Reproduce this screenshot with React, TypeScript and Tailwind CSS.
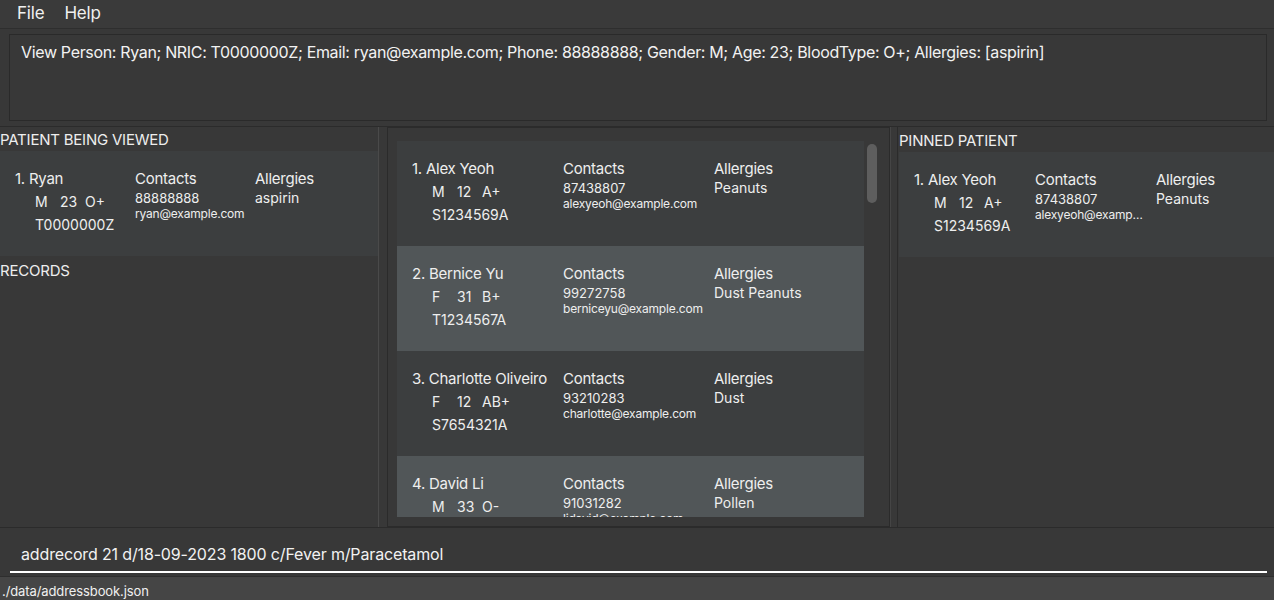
import type { ReactNode } from "react";

type Patient = {
  name: string;
  gender: string;
  age: string;
  blood: string;
  nric: string;
  phone: string;
  email: string;
  allergies: string;
};

const patients: Patient[] = [
  { name: "Alex Yeoh", gender: "M", age: "12", blood: "A+", nric: "S1234569A", phone: "87438807", email: "alexyeoh@example.com", allergies: "Peanuts" },
  { name: "Bernice Yu", gender: "F", age: "31", blood: "B+", nric: "T1234567A", phone: "99272758", email: "berniceyu@example.com", allergies: "Dust Peanuts" },
  { name: "Charlotte Oliveiro", gender: "F", age: "12", blood: "AB+", nric: "S7654321A", phone: "93210283", email: "charlotte@example.com", allergies: "Dust" },
  { name: "David Li", gender: "M", age: "33", blood: "O-", nric: "S1111111A", phone: "91031282", email: "lidavid@example.com", allergies: "Pollen" },
];

const viewed: Patient = {
  name: "Ryan",
  gender: "M",
  age: "23",
  blood: "O+",
  nric: "T0000000Z",
  phone: "88888888",
  email: "ryan@example.com",
  allergies: "aspirin",
};

function PatientCard({
  index,
  p,
  col,
  emailWidth,
  odd,
}: {
  index: number;
  p: Patient;
  col: string;
  emailWidth: string;
  odd?: boolean;
}) {
  return (
    <div
      className={`flex h-[105px] shrink-0 pl-[15px] pt-[18px] text-[#eeeeee] ${
        odd ? "bg-[#515658]" : "bg-[#3c3e3f]"
      }`}
    >
      <div className={`flex shrink-0 flex-col gap-[3px] ${col}`}>
        <div className="whitespace-nowrap text-[15px] leading-[20px] tracking-[-0.25px]">
          {index}. {p.name}
        </div>
        <div className="flex pl-[20px] text-[14px] leading-[20px]">
          <span className="w-[25px]">{p.gender}</span>
          <span className="w-[25px]">{p.age}</span>
          <span className="w-[25px]">{p.blood}</span>
        </div>
        <div className="pl-[20px] text-[14px] leading-[20px]">{p.nric}</div>
      </div>
      <div className={`flex shrink-0 flex-col ${col}`}>
        <div className="text-[15px] leading-[20px] tracking-[-0.25px]">Contacts</div>
        <div className="mt-[1px] text-[13px] leading-[16px]">{p.phone}</div>
        <div className={`truncate text-[12px] leading-[16px] tracking-[-0.2px] ${emailWidth}`}>{p.email}</div>
      </div>
      <div className="flex flex-col">
        <div className="text-[15px] leading-[20px] tracking-[-0.25px]">Allergies</div>
        <div className="mt-[1px] text-[14px] leading-[16px]">{p.allergies}</div>
      </div>
    </div>
  );
}

function SectionLabel({ children }: { children: ReactNode }) {
  return (
    <div className="h-[22px] text-[15px] leading-[22px] tracking-[-0.22px] text-[#eeeeee]">{children}</div>
  );
}

export default function App() {
  return (
    <div
      className="flex h-[600px] w-[1274px] flex-col overflow-hidden bg-[#383838] text-white"
      style={{ fontFamily: "Inter, 'Noto Sans', sans-serif" }}
    >
      {/* menu bar */}
      <div className="flex h-[29px] shrink-0 items-center gap-[20px] border-b border-[#2e2e2e] bg-[#3a3a3a] pl-[17px] text-[17px] tracking-[-0.2px] text-[#f0f0f0]">
        <span>File</span>
        <span>Help</span>
      </div>

      {/* result display */}
      <div className="shrink-0 border-b border-[#2b2b2b] px-[7px] pb-[5px] pt-[5px]">
        <div className="ml-[2px] h-[87px] border border-[#2a2a2a] bg-[#383838] pl-[11px] pt-[6px] text-[16px] leading-[22px] tracking-[-0.34px] text-[#f2f2f2]">
          View Person: Ryan; NRIC: T0000000Z; Email: ryan@example.com; Phone: 88888888; Gender: M; Age: 23; BloodType: O+; Allergies: [aspirin]
        </div>
      </div>

      {/* panels */}
      <div className="flex h-[401px] shrink-0 border-b border-[#2b2b2b]">
        <div className="flex w-[378px] shrink-0 flex-col pt-[2px]">
          <SectionLabel>PATIENT BEING VIEWED</SectionLabel>
          <PatientCard index={1} p={viewed} col="w-[120px]" emailWidth="max-w-[118px]" />
          <div className="mt-[4px]">
            <SectionLabel>RECORDS</SectionLabel>
          </div>
        </div>
        <div className="w-[9px] shrink-0 border-l border-[#4a4a4a]" />
        <div className="flex w-[503px] shrink-0 border border-[#2b2b2b] pl-[9px] pt-[13px]">
          <div className="flex h-[376px] w-[467px] flex-col overflow-hidden">
            {patients.map((p, i) => (
              <PatientCard
                key={p.nric}
                index={i + 1}
                p={p}
                col="w-[151px]"
                emailWidth="max-w-[148px]"
                odd={i % 2 === 1}
              />
            ))}
          </div>
          <div className="ml-[3px] pt-[3px]">
            <div className="h-[59px] w-[10px] rounded-[5px] bg-[#5e5e5e]" />
          </div>
        </div>
        <div className="w-[8px] shrink-0 border-l border-r border-[#2b2b2b] border-l-[#454545]" />
        <div className="flex flex-1 flex-col pl-[1px] pt-[3px]">
          <SectionLabel>PINNED PATIENT</SectionLabel>
          <PatientCard index={1} p={patients[0]} col="w-[121px]" emailWidth="max-w-[110px]" />
        </div>
      </div>

      {/* command box */}
      <div className="flex h-[48px] shrink-0 flex-col px-[10px] pt-[15px]">
        <div className="mr-[-3px] h-[30px] border-b-2 border-white pl-[11px] text-[16px] leading-[22px] tracking-[-0.15px] text-[#f2f2f2]">
          addrecord 21 d/18-09-2023 1800 c/Fever m/Paracetamol
        </div>
      </div>

      {/* status bar */}
      <div className="flex-1 border-t border-[#2e2e2e] bg-[#454545] pl-[2px] pt-[4px] text-[13px] leading-[20px] tracking-[-0.1px] text-[#f0f0f0]">
        ./data/addressbook.json
      </div>
    </div>
  );
}
